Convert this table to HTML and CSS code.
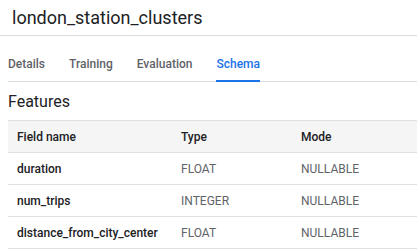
FILE: index.html
```html
<!DOCTYPE html>
<html>
<head>
<meta charset="utf-8">
<link rel="stylesheet" href="styles.css">
</head>
<body>
<header class="title-bar">
  <h1 class="title">london_station_clusters</h1>
</header>
<nav class="tabs">
  <span class="tab">Details</span>
  <span class="tab">Training</span>
  <span class="tab">Evaluation</span>
  <span class="tab active">Schema</span>
</nav>
<h2 class="section-title">Features</h2>
<table class="schema">
  <colgroup><col class="c1"><col class="c2"><col class="c3"></colgroup>
  <thead>
    <tr><th>Field name</th><th>Type</th><th>Mode</th></tr>
  </thead>
  <tbody>
    <tr><td class="name">duration</td><td>FLOAT</td><td>NULLABLE</td></tr>
    <tr><td class="name">num_trips</td><td>INTEGER</td><td>NULLABLE</td></tr>
    <tr><td class="name">distance_from_city_center</td><td>FLOAT</td><td>NULLABLE</td></tr>
  </tbody>
</table>
</body>
</html>
```
FILE: styles.css
```css
* { box-sizing: border-box; }
body {
  margin: 0;
  font-family: Roboto, "Liberation Sans", sans-serif;
  color: #202124;
  background: #fff;
  overflow: hidden;
}
.title-bar {
  height: 36px;
  border-bottom: 1px solid #dadce0;
  padding: 0 12px;
  display: flex;
  align-items: center;
}
.title {
  margin: 0;
  font-size: 18px;
  font-weight: 400;
  color: #202124;
}
.tabs {
  margin: 0 0 0 8px;
  height: 46px;
  display: flex;
  gap: 24px;
  border-bottom: 1px solid #dadce0;
}
.tab {
  display: flex;
  align-items: center;
  padding-top: 12px;
  font-size: 12px;
  font-weight: 500;
  color: #5f6368;
  border-bottom: 2px solid transparent;
  margin-bottom: -1px;
}
.tab.active {
  color: #1a73e8;
  border-bottom-color: #1a73e8;
}
.section-title {
  margin: 10px 0 0 8px;
  font-size: 16px;
  font-weight: 400;
  line-height: 20px;
  color: #202124;
}
.schema {
  margin: 8px 0 0 8px;
  width: 409px;
  table-layout: fixed;
  border-collapse: collapse;
  font-size: 12px;
}
.schema th, .schema td {
  height: 32px;
  padding: 0 9px;
  text-align: left;
  border-top: 1px solid #e0e0e0;
  border-bottom: 1px solid #e0e0e0;
  white-space: nowrap;
}
.schema th {
  background: #f5f5f5;
  font-weight: 500;
  color: #202124;
}
.schema td {
  color: #5f6368;
}
.schema td.name {
  color: #202124;
  font-weight: 500;
}
.c1 { width: 164px; }
.c2 { width: 120px; }
```
